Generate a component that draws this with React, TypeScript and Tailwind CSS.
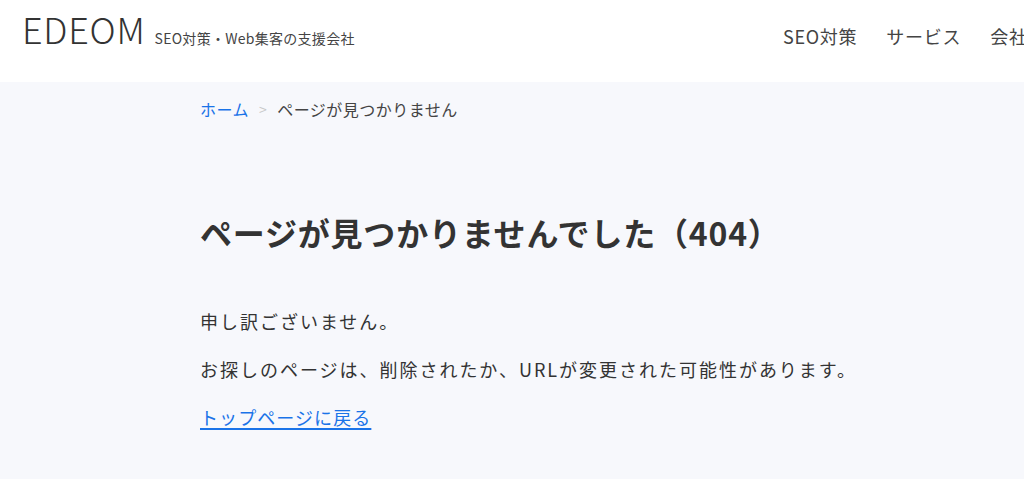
export default function App() {
  const navItems = ["SEO対策", "サービス", "会社概要", "お問い合わせ"];

  return (
    <div
      className="min-h-screen bg-[#f7f8fc] text-[#333333]"
      style={{ fontFamily: '"Noto Sans CJK JP", "Noto Sans", sans-serif' }}
    >
      {/* Header */}
      <header className="h-[82px] bg-white flex items-center pb-[10px] overflow-hidden">
        <div className="w-[783px] shrink-0 pl-[22px] mb-[16px] flex items-baseline">
          <span className="text-[36px] leading-none font-light tracking-[0.02em] text-[#333]">EDEOM</span>
          <span className="ml-[9px] text-[14px] leading-none tracking-[0.02em] text-[#444]">
            SEO対策・Web集客の支援会社
          </span>
        </div>
        <nav className="flex shrink-0 gap-[29px] whitespace-nowrap">
          {navItems.map((item) => (
            <a key={item} href="#" className="text-[18px] leading-none tracking-[0.04em] text-[#444]">
              {item}
            </a>
          ))}
        </nav>
      </header>

      {/* Main */}
      <main className="pl-[200px] pt-[15px] pb-[40px]">
        <div className="flex items-center text-[16px] leading-[24px] tracking-[0.03em]">
          <a href="#" className="text-[#1a73e8]">ホーム</a>
          <span className="mx-[10px] text-[#c8c8c8] text-[14px]">&gt;</span>
          <span className="text-[#444]">ページが見つかりません</span>
        </div>

        <h1 className="mt-[87px] text-[32px] leading-[48px] font-bold tracking-[0.025em] text-[#333]">
          ページが見つかりませんでした（404）
        </h1>

        <div className="mt-[52px] text-[18px] leading-[27px] tracking-[0.11em] whitespace-nowrap">
          <p>申し訳ございません。</p>
          <p className="mt-[21px]">お探しのページは、削除されたか、URLが変更された可能性があります。</p>
          <p className="mt-[21px]">
            <a
              href="#"
              className="text-[#1a73e8] tracking-[0.06em] underline decoration-[1.5px] underline-offset-[3px]"
            >
              トップページに戻る
            </a>
          </p>
        </div>
      </main>
    </div>
  );
}
